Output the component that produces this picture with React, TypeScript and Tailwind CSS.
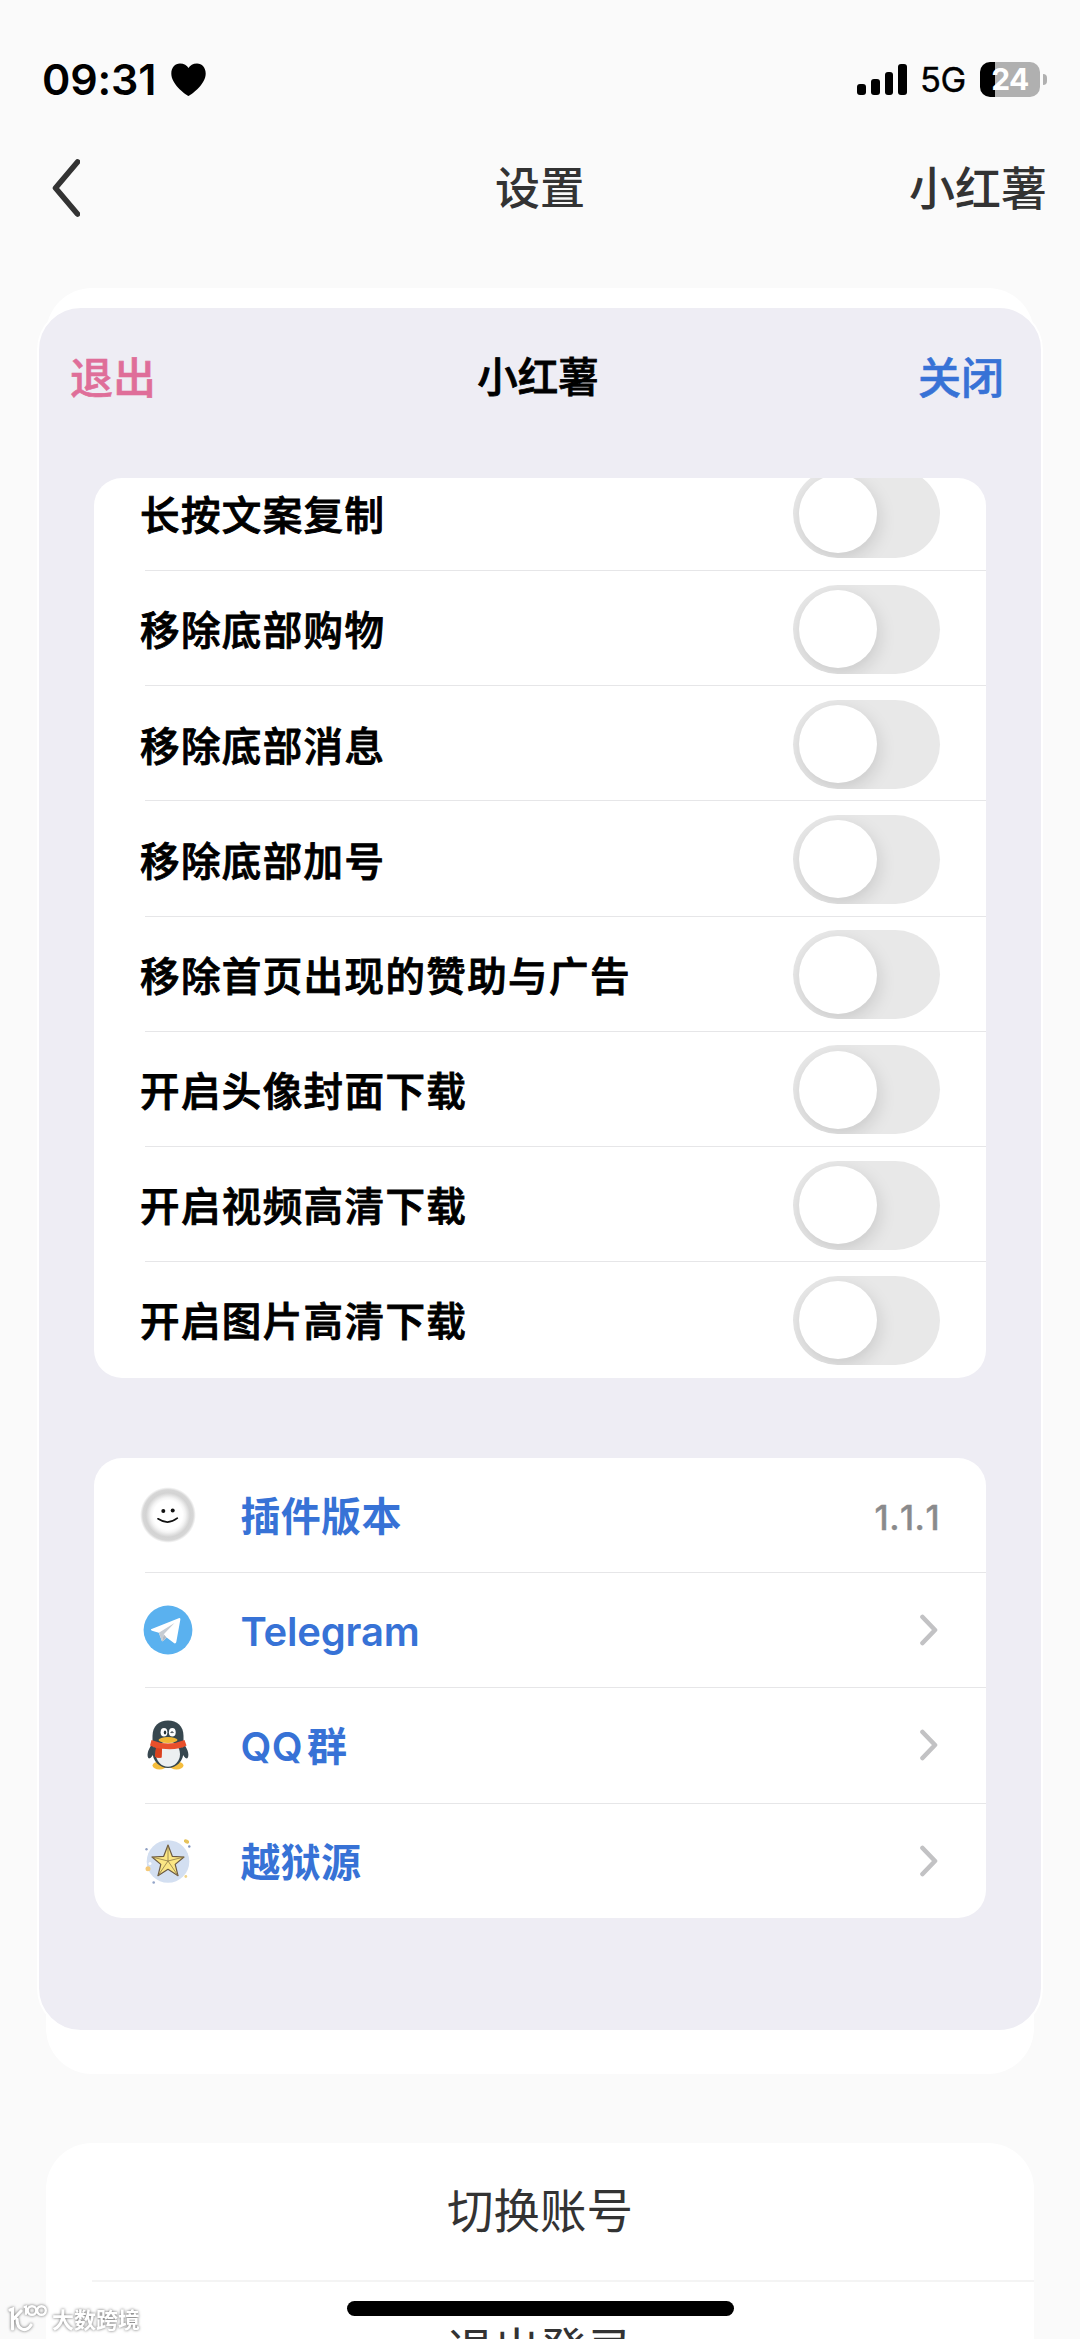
import type { ReactNode } from "react";

const toggles = [
  "长按文案复制",
  "移除底部购物",
  "移除底部消息",
  "移除底部加号",
  "移除首页出现的赞助与广告",
  "开启头像封面下载",
  "开启视频高清下载",
  "开启图片高清下载",
];

function Switch() {
  return (
    <div className="flex h-[89px] w-[147px] shrink-0 items-center overflow-hidden rounded-full bg-[#e8e8e8] pl-[6px]">
      <div className="size-[78px] rounded-full bg-white shadow-[2px_6px_18px_0px_rgba(0,0,0,0.13)]" />
    </div>
  );
}

function Smiley() {
  return (
    <svg viewBox="0 0 60 60" className="size-[60px]">
      <defs>
        <radialGradient id="ring">
          <stop offset="0.5" stopColor="#fff" />
          <stop offset="0.6" stopColor="#f4f4f4" />
          <stop offset="0.76" stopColor="#d3d3d3" />
          <stop offset="0.87" stopColor="#d6d6d6" />
          <stop offset="0.96" stopColor="#fff" />
        </radialGradient>
      </defs>
      <circle cx="30" cy="30" r="29" fill="url(#ring)" />
      <circle cx="25.3" cy="26" r="2" fill="#111" />
      <circle cx="34.7" cy="25.6" r="2" fill="#111" />
      <path d="M20 33.8 Q30 40.5 39.3 33.2" fill="none" stroke="#111" strokeWidth="1.7" strokeLinecap="round" />
    </svg>
  );
}

function Telegram() {
  return (
    <svg viewBox="0 0 60 60" className="size-[60px]">
      <circle cx="30" cy="30" r="24.4" fill="#5ab1ef" />
      <path d="M13 29.3 Q12.500 30.300 14 30.700 L20.800 32.800 L24 41.200 Q25 41.800 28.600 37.600 L36.300 43.300 Q37.900 43.800 38.300 42 L42.400 19.300 Q42.300 17.700 40.700 18.200 Z" fill="#fff" />
      <path d="M20.800 32.800 L36.500 23 L25.800 34.300 L24 41.200 Z" fill="#c6ccd3" />
      <path d="M25.800 34.300 L28.600 37.600 Q25.300 41.600 24 41.200 Z" fill="#b3bac3" />
    </svg>
  );
}

function Penguin() {
  return (
    <svg viewBox="0 0 60 60" className="size-[60px]">
      <ellipse cx="21.500" cy="50.500" rx="7" ry="4" fill="#f5bd3c" />
      <ellipse cx="38.500" cy="50.500" rx="7" ry="4" fill="#f5bd3c" />
      <path d="M15 28 C9 35 8.500 42 11 43.500 C13 43.500 15 40 16 38 Z M45 28 C51 35 51.500 42 49 43.500 C47 43.500 45 40 44 38 Z" fill="#37474f" />
      <ellipse cx="30" cy="37" rx="15.500" ry="16" fill="#37474f" />
      <path d="M14.500 29 V21 C14.500 11 21 5.500 30 5.500 C39 5.500 45.500 11 45.500 21 V29 Z" fill="#37474f" />
      <ellipse cx="30" cy="39" rx="12" ry="12.800" fill="#eceff1" />
      <ellipse cx="26" cy="17.300" rx="3.400" ry="4.300" fill="#fff" />
      <ellipse cx="34.300" cy="17.300" rx="3.400" ry="4.300" fill="#fff" />
      <ellipse cx="27" cy="17.500" rx="1.200" ry="2" fill="#263238" />
      <path d="M32.800 18 Q34 15.500 35.300 18" fill="none" stroke="#263238" strokeWidth="1.200" />
      <ellipse cx="30" cy="25" rx="9.500" ry="2.900" fill="#f2b632" />
      <path d="M13.500 25 Q30 32 46.500 25 L48.500 30.500 Q40 35.500 24 33.800 L23.500 42.500 Q19 43.500 17 41.500 L18 33 L12 30.500 Z" fill="#e9502b" />
      <path d="M18 33 L24 33.800 L23.500 42.500 Q19 43.500 17 41.500 Z" fill="#d9411f" />
    </svg>
  );
}

function StarBadge() {
  return (
    <svg viewBox="0 0 60 60" className="size-[60px]">
      <circle cx="30" cy="30.500" r="21.300" fill="#d3dff1" />
      <path d="M30 14 L34.300 25.300 L46 26 L37.200 33.400 L40 44.700 L30 38.300 L20 44.700 L22.800 33.400 L14 26 L25.700 25.300 Z" fill="#fbe684" stroke="#6b5a45" strokeWidth="1.200" strokeLinejoin="round" />
      <path d="M30 30 V14 M30 30 L46 26 M30 30 L40 44.700 M30 30 L20 44.700 M30 30 L14 26" stroke="#8d7848" strokeWidth="0.800" fill="none" />
      <ellipse cx="48.500" cy="10.500" rx="2.800" ry="1.900" fill="#e6c35c" transform="rotate(25 48.500 10.500)" />
      <circle cx="51.300" cy="15.500" r="1.200" fill="#7f93bd" />
      <circle cx="8.500" cy="18.300" r="1.200" fill="#8fa0c4" />
      <circle cx="10" cy="37.700" r="2.500" fill="#f4c978" />
      <circle cx="12" cy="32.500" r="1.500" fill="#fff" />
      <circle cx="15.700" cy="51.500" r="1.300" fill="#93a4c8" />
      <circle cx="47.800" cy="45.500" r="1.400" fill="#f0d48a" />
    </svg>
  );
}

function Chevron() {
  return (
    <svg viewBox="0 0 18 32" className="mr-[2px] h-8 w-[18px]">
      <path d="M2.500 3 L15 16 L2.500 29" fill="none" stroke="#c2c2c4" strokeWidth="4.600" strokeLinecap="round" strokeLinejoin="round" />
    </svg>
  );
}

const links: { icon: ReactNode; label: ReactNode; value?: string }[] = [
  { icon: <Smiley />, label: "插件版本", value: "1.1.1" },
  { icon: <Telegram />, label: <span className="tracking-[-0.2px]">Telegram</span> },
  {
    icon: <Penguin />,
    label: (
      <>
        <span className="mr-1">QQ</span>群
      </>
    ),
  },
  { icon: <StarBadge />, label: "越狱源" },
];

function StatusBar() {
  return (
    <div className="flex h-[158px] items-center justify-between pl-[42px] pr-[33px] font-['Inter']">
      <div className="flex items-center text-black">
        <span className="w-[129px] text-[43px] leading-none font-semibold tracking-[-0.2px]">09:31</span>
        <svg viewBox="0 0 35 33" className="h-[33px] w-[35px]">
          <path d="M17.500 33 C13 30.500 0.300 21 0.300 10.500 C0.300 4.500 4 0.500 9 0.500 C13 0.500 16 2.500 17.500 5 C19 2.500 22 0.500 26 0.500 C31 0.500 34.700 4.500 34.700 10.500 C34.700 21 22 30.500 17.500 33 Z" />
        </svg>
      </div>
      <div className="flex items-center">
        <div className="flex h-[31px] items-end gap-[4.800px]">
          <div className="h-[11px] w-[8.800px] rounded-[3px] bg-black" />
          <div className="h-[16px] w-[8.800px] rounded-[3px] bg-black" />
          <div className="h-[23px] w-[8.800px] rounded-[3px] bg-black" />
          <div className="h-[31px] w-[8.800px] rounded-[3px] bg-black" />
        </div>
        <span className="ml-[13px] w-[60px] pt-[3px] text-[34.500px] leading-none tracking-[-0.500px] text-black [-webkit-text-stroke:0.400px]">5G</span>
        <div className="flex h-[35px] w-[60px] items-center justify-center rounded-[10px] bg-[linear-gradient(90deg,#000_15px,#b0b0b0_15px)] text-[30px] leading-none font-bold tracking-[-0.500px] text-white">
          24
        </div>
        <div className="ml-[3px] h-[11px] w-[4px] rounded-r-full bg-[#b0b0b0]" />
      </div>
    </div>
  );
}

function NavBar() {
  return (
    <div className="grid h-[60px] grid-cols-3 items-center font-medium text-[#333]">
      <svg viewBox="0 0 28 58" className="ml-[52px] h-[58px] w-7">
        <path d="M25.500 3 L3.500 29 L25.500 55" fill="none" stroke="#333" strokeWidth="5.600" strokeLinecap="round" strokeLinejoin="round" />
      </svg>
      <span className="pb-[6px] text-center text-[45px] leading-none">设置</span>
      <span className="pr-[33px] pb-[6px] text-right text-[46px] leading-none">小红薯</span>
    </div>
  );
}

function Panel() {
  return (
    <section className="-mx-[9px] h-[1726px] rounded-[44px] border-2 border-white bg-[#eeedf4] px-[55px] pt-[2px]">
      <header className="-mx-[22px] flex h-[130px] items-center justify-between text-[43px] leading-none font-medium">
        <span className="-ml-[2px] w-[122px] text-[#df6e99] [-webkit-text-stroke:0.600px]">退出</span>
        <h1 className="text-[40.500px] text-black [-webkit-text-stroke:0.800px]">小红薯</h1>
        <span className="w-[124px] pr-[4px] text-right text-[#3772d6] [-webkit-text-stroke:0.600px]">关闭</span>
      </header>
      <div className="mt-[37.500px] h-[900px] overflow-hidden rounded-[28px] bg-white">
        <ul className="-mt-[21.700px]">
          {toggles.map((label) => (
            <li key={label} className="ml-[51px] box-content h-[114.200px] border-b border-[#e6e6e8] last:border-b-0">
              <div className="-ml-[5px] flex h-full items-center justify-between pt-[2px] pr-[46px] text-[39.500px] leading-none font-medium tracking-[1.400px] text-black [-webkit-text-stroke:0.900px]">
                <span className="pb-[2px]">{label}</span>
                <Switch />
              </div>
            </li>
          ))}
        </ul>
      </div>
      <ul className="mt-[80px] overflow-hidden rounded-[28px] bg-white">
        {links.map(({ icon, label, value }, i) => (
          <li key={i} className="ml-[51px] box-content h-[114.400px] border-b border-[#e6e6e8] last:border-b-0">
            <div className="-ml-[7px] flex h-full items-center pr-[46px] text-[40px] leading-none text-[#3772d6]">
              {icon}
              <span className="ml-[42.500px] flex-1 pt-[4px] font-['Inter','Noto_Sans_CJK_SC',sans-serif] font-semibold tracking-[0.300px]">{label}</span>
              {value ? (
                <span className="pt-[6px] font-['Inter'] text-[34px] font-medium tracking-[0.500px] text-[#8a8a8c] [font-kerning:none] [-webkit-text-stroke:0.400px]">
                  {value}
                </span>
              ) : (
                <Chevron />
              )}
            </div>
          </li>
        ))}
      </ul>
    </section>
  );
}

export default function App() {
  return (
    <main className="relative h-[2339px] w-[1080px] overflow-hidden bg-[#fafafa] font-['Noto_Sans_CJK_SC',sans-serif]">
      <StatusBar />
      <NavBar />
      <div className="mx-[46px] mt-[70px] h-[1786px] rounded-[46px] bg-white pt-[18px]">
        <Panel />
      </div>
      <div className="mx-[46px] mt-[69px] rounded-t-[46px] bg-white text-center text-[46.500px] leading-none text-[#333]">
        <div className="flex h-[137px] items-center justify-center pb-[6px]">切换账号</div>
        <div className="ml-[46px] h-[2px] bg-[#f4f4f4]" />
        <div className="flex h-[137px] items-center justify-center pb-[6px]">退出登录</div>
      </div>
      <div className="absolute top-[2301px] left-[347px] h-[15px] w-[387px] rounded-full bg-black" />
      <div className="absolute top-[2303px] left-[8px] flex items-center gap-[4px] text-white drop-shadow-[0_0_1.500px_rgba(0,0,0,0.600)]">
        <svg viewBox="0 0 40 30" className="h-[30px] w-10" fill="none" stroke="#fff" strokeWidth="3.200" strokeLinecap="round">
          <path d="M2 7 L4.500 6 V26 M13 8 L5.500 16 M9 16 C9 27 18 30 23 22" />
          <path d="M16.500 4 L18 3.500 V11" strokeWidth="2.200" />
          <circle cx="24" cy="7.500" r="4.300" strokeWidth="2.400" />
          <circle cx="33.500" cy="7.500" r="4.300" strokeWidth="2.400" />
        </svg>
        <span className="text-[22px] leading-none font-bold">大数跨境</span>
      </div>
    </main>
  );
}
